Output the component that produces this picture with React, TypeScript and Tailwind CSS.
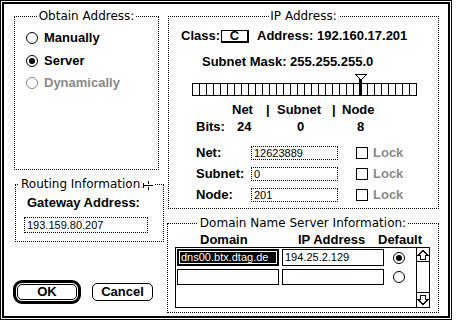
import React from "react";

const chicago = "font-['Liberation_Sans',Arial,sans-serif] font-bold text-[13px] leading-[14px]";
const geneva = "font-['DejaVu_Sans',sans-serif] text-[12px] leading-[12px]";
const small = "font-['Liberation_Sans',Arial,sans-serif] text-[11px] leading-[13px]";

function Radio({ checked = false, disabled = false }: { checked?: boolean; disabled?: boolean }) {
  return (
    <span
      className={`w-[12px] h-[12px] rounded-full border bg-white flex items-center justify-center shrink-0 ${
        disabled ? "border-[#8a8a8a]" : "border-black"
      }`}
    >
      {checked && <span className="w-[6px] h-[6px] rounded-full bg-black" />}
    </span>
  );
}

function GroupTitle({ text, left }: { text: string; left?: boolean }) {
  return (
    <span
      className={`absolute -top-[7px] bg-white px-[2px] whitespace-nowrap ${geneva} ${
        left ? "left-[3px]" : "left-1/2 -translate-x-1/2"
      }`}
    >
      {text}
    </span>
  );
}

function BitBar() {
  const lines = Array.from({ length: 31 }, (_, i) => 0.5 + 7 * (i + 1));
  return (
    <svg width="226" height="22" className="block" shapeRendering="crispEdges">
      <rect x="0.5" y="9.5" width="224" height="12" fill="white" stroke="black" />
      {lines.map((x) => (
        <line key={x} x1={x} y1={9.5} x2={x} y2={21.5} stroke="black" />
      ))}
      <rect x="167" y="5" width="3" height="17" fill="black" />
      <polygon points="163.5,0.5 174.5,0.5 169,6" fill="white" stroke="black" />
    </svg>
  );
}

function Arrow({ down = false }: { down?: boolean }) {
  return (
    <svg width="12" height="12" className={down ? "rotate-180" : ""} shapeRendering="crispEdges">
      <path d="M6 1.5 L11 6.5 H8.5 V10.5 H3.5 V6.5 H1 Z" fill="white" stroke="black" />
    </svg>
  );
}

function LockRow({ label, value, first }: { label: string; value: string; first?: boolean }) {
  return (
    <div className={`flex items-center h-[14px] ml-[27px] ${first ? "mt-[12px]" : "mt-[7px]"}`}>
      <span className={`w-[55px] ${chicago}`}>{label}</span>
      <div className={`w-[87px] h-[14px] border border-dotted border-black pl-[2px] flex items-center ${small}`}>
        {value}
      </div>
      <span className="ml-[18px] w-[12px] h-[12px] border border-black bg-white" />
      <span className={`ml-[5px] text-[#8a8a8a] ${chicago}`}>Lock</span>
    </div>
  );
}

export default function App() {
  return (
    <div className="w-[456px] h-[324px] bg-white text-black">
      <div className="w-[452px] h-[320px] border border-black p-[1px]">
        <div className="w-full h-full border-2 border-black flex pl-[9px] pt-[12px]">
          {/* left column */}
          <div className="w-[151px] flex flex-col">
            <div className="ml-[1px] w-[145px] h-[154px] relative border border-dotted border-black pl-[11px] pt-[14px]">
              <GroupTitle text="Obtain Address:" />
              <div className="flex items-center gap-[6px] h-[14px]">
                <Radio />
                <span className={chicago}>Manually</span>
              </div>
              <div className="flex items-center gap-[6px] h-[14px] mt-[9px]">
                <Radio checked />
                <span className={chicago}>Server</span>
              </div>
              <div className="flex items-center gap-[6px] h-[14px] mt-[8px]">
                <Radio disabled />
                <span className={`text-[#8a8a8a] ${chicago}`}>Dynamically</span>
              </div>
            </div>

            <div className="mt-[14px] ml-[2px] w-[149px] h-[58px] relative border border-dotted border-black">
              <GroupTitle text="Routing Information:" left />
              <svg width="12" height="11" className="absolute left-[126px] -top-[5px]" shapeRendering="crispEdges">
                <rect x="0" y="0" width="12" height="11" fill="white" />
                <path d="M1 5.5 H11 M6.5 1 V4 M6.5 7 V10 M1.5 3 V8" stroke="black" />
              </svg>
              <div className={`mt-[11px] ml-[11px] ${chicago}`}>Gateway Address:</div>
              <div className={`mt-[7px] ml-[8px] w-[124px] h-[16px] border border-dotted border-black pl-[2px] flex items-center ${small}`}>
                193.159.80.207
              </div>
            </div>

            <div className="mt-[38px] flex items-center">
              <div className="w-[68px] h-[24px] border-[3px] border-black rounded-[9px] p-[1px]">
                <div className={`h-full border border-black rounded-[5px] flex items-center justify-center ${chicago}`}>
                  OK
                </div>
              </div>
              <div className={`ml-[11px] w-[61px] h-[18px] border border-black rounded-[5px] flex items-center justify-center ${chicago}`}>
                Cancel
              </div>
            </div>
          </div>

          {/* right column */}
          <div className="ml-[3px] flex flex-col">
            <div className="ml-[1px] w-[271px] h-[193px] relative border border-dotted border-black">
              <GroupTitle text="IP Address:" />
              <div className="mt-[12px] ml-[12px] flex items-center h-[14px]">
                <span className={`w-[40px] ${chicago}`}>Class:</span>
                <span className={`w-[28px] h-[13px] border-t border-l border-r-2 border-b-2 border-black flex items-center justify-center ${chicago}`}>
                  C
                </span>
                <span className={`ml-[8px] ${chicago}`}>Address: 192.160.17.201</span>
              </div>
              <div className={`mt-[12px] ml-[33px] ${chicago}`}>Subnet Mask: 255.255.255.0</div>
              <div className="mt-[5px] ml-[23px]">
                <BitBar />
              </div>
              <div className={`mt-[7px] ml-[63px] flex ${chicago}`}>
                <span className="w-[34px]">Net</span>
                <span className="w-[11px]">|</span>
                <span className="w-[55px]">Subnet</span>
                <span className="w-[10px]">|</span>
                <span>Node</span>
              </div>
              <div className={`mt-[3px] ml-[27px] flex ${chicago}`}>
                <span className="w-[41px]">Bits:</span>
                <span className="w-[60px]">24</span>
                <span className="w-[60px]">0</span>
                <span>8</span>
              </div>
              <LockRow label="Net:" value="12623889" first />
              <LockRow label="Subnet:" value="0" />
              <LockRow label="Node:" value="201" />
            </div>

            <div className="mt-[14px] w-[272px] h-[90px] relative border border-dotted border-black">
              <GroupTitle text="Domain Name Server Information:" />
              <div className={`mt-[9px] h-[14px] flex ${chicago}`}>
                <span className="ml-[32px] w-[98px]">Domain</span>
                <span className="w-[80px]">IP Address</span>
                <span>Default</span>
              </div>
              <div className="ml-[7px] w-[255px] h-[61px] border border-black flex">
                <div className="w-[240px]">
                  <div className="mt-[1px] ml-[1px] flex items-center">
                    <div className="w-[102px] h-[17px] border-2 border-black p-[1px]">
                      <div className={`h-full bg-black text-white pl-[1px] flex items-center ${small}`}>
                        dns00.btx.dtag.de
                      </div>
                    </div>
                    <div className={`ml-[3px] w-[102px] h-[17px] border border-black pl-[2px] flex items-center ${small}`}>
                      194.25.2.129
                    </div>
                    <span className="ml-[9px]">
                      <Radio checked />
                    </span>
                  </div>
                  <div className="mt-[3px] ml-[1px] flex items-center">
                    <div className="w-[102px] h-[16px] border border-black" />
                    <div className="ml-[3px] w-[102px] h-[16px] border border-black" />
                    <span className="ml-[9px]">
                      <Radio />
                    </span>
                  </div>
                </div>
                <div className="w-[13px] border-l border-black flex flex-col justify-between">
                  <div className="h-[14px] border-b border-black flex items-center justify-center">
                    <Arrow />
                  </div>
                  <div className="h-[15px] border-t border-black flex items-center justify-center">
                    <Arrow down />
                  </div>
                </div>
              </div>
            </div>
          </div>
        </div>
      </div>
    </div>
  );
}
